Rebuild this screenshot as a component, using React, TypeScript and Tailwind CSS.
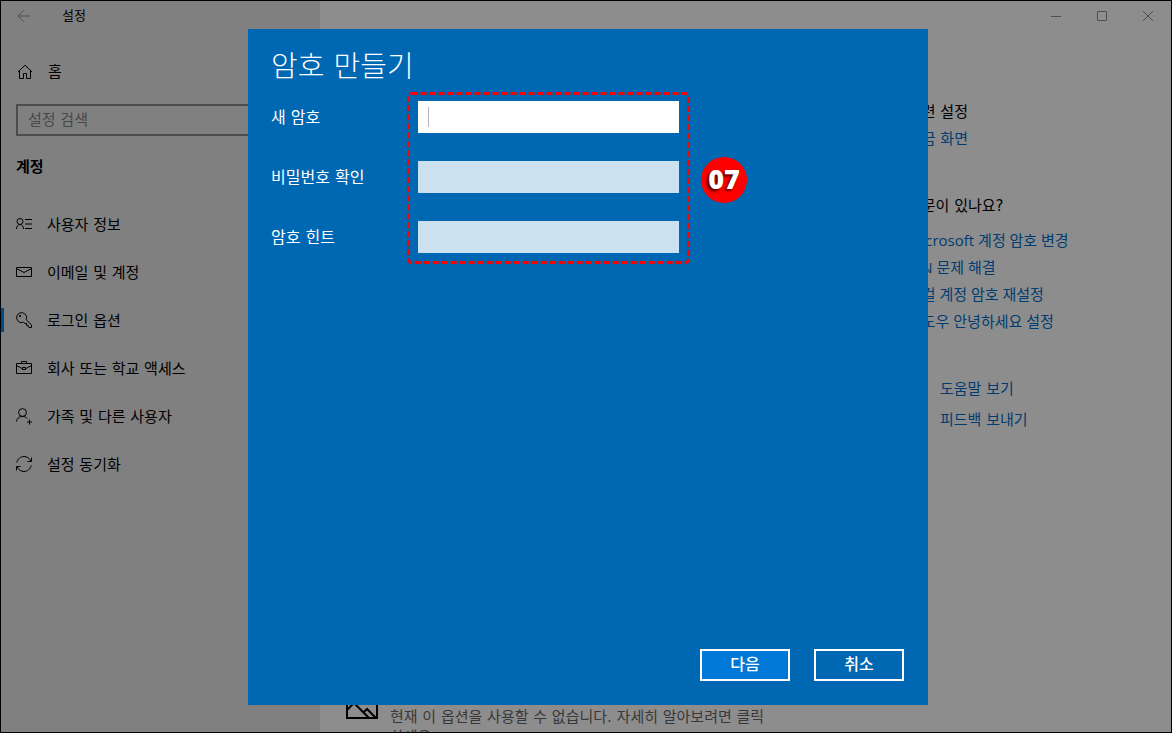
import { useState, type ReactNode } from "react";

const navItems: { id: string; label: string; icon: ReactNode }[] = [
  {
    id: "info",
    label: "사용자 정보",
    icon: (
      <>
        <circle cx="4" cy="5.5" r="3" />
        <path d="M.5 13c0-2.700 1.500-4.500 3.500-4.500s3.500 1.800 3.500 4.500M9 3.500h7M9 8h7M9 12.500h7" />
      </>
    ),
  },
  {
    id: "email",
    label: "이메일 및 계정",
    icon: <path d="M.5 3.500h15v9H.5zM.5 4.500l7.500 4 7.500-4" />,
  },
  {
    id: "signin",
    label: "로그인 옵션",
    icon: (
      <>
        <path d="M10.200 7.700A5 5 0 1 0 7.500 10.300l1.500 1.200h1.500v1.800h1.700v1.500l.8.700h2.500v-2.600z" />
        <circle cx="4" cy="4" r=".7" />
      </>
    ),
  },
  {
    id: "work",
    label: "회사 또는 학교 액세스",
    icon: <path d="M.5 3.500h15v10H.5zM5.500 3.500v-2h5v2M.5 5.500l5.500 3M15.500 5.500l-5.500 3M6.500 7.500h3v2h-3z" />,
  },
  {
    id: "family",
    label: "가족 및 다른 사용자",
    icon: (
      <>
        <circle cx="6.500" cy="4.500" r="3.900" />
        <path d="M.5 13.500c.3-3.300 2.700-5.100 6-5.100 2 0 3.700.8 4.800 2.300M13.500 11.500v5M11 14h5" />
      </>
    ),
  },
  {
    id: "sync",
    label: "설정 동기화",
    icon: <path d="M.8 6.500C1.700 3 4.500.5 8 .5c3.200 0 5.800 2 7 5M15.500 1.500v4h-4M15.200 9.500C14.300 13 11.500 15.500 8 15.500c-3.200 0-5.800-2-7-5M.5 14.500v-4h4" />,
  },
];

const supportLinks = ["Microsoft 계정 암호 변경", "PIN 문제 해결", "로컬 계정 암호 재설정", "윈도우 안녕하세요 설정"];

const fields = [
  { id: "new-password", label: "새 암호", type: "password" },
  { id: "confirm-password", label: "비밀번호 확인", type: "password" },
  { id: "hint", label: "암호 힌트", type: "text" },
];

function Icon({ children }: { children: ReactNode }) {
  return (
    <svg viewBox="0 0 16 16" className="size-4 shrink-0 overflow-visible" fill="none" stroke="currentColor" aria-hidden="true">
      {children}
    </svg>
  );
}

function Sidebar({ active, onSelect }: { active: string; onSelect: (id: string) => void }) {
  return (
    <aside className="w-[319px] shrink-0 bg-[#808080]">
      <div className="flex h-[30px] items-center pl-[15px] text-[13px]">
        <button aria-label="뒤로" className="mr-[30px] text-[#505050]">
          <Icon>
            <path d="M14 8H2M7.500 2.500L2 8l5.500 5.500" />
          </Icon>
        </button>
        설정
      </div>
      <button className="mt-[17px] flex h-12 w-full items-center gap-[15px] pl-4">
        <Icon>
          <path d="M.8 8L8 1.200 15.200 8M2.500 6.500v8h4v-5h3v5h4v-8" />
        </Icon>
        홈
      </button>
      <input
        type="search"
        aria-label="설정 검색"
        placeholder="설정 검색"
        className="mt-2 ml-[15px] block h-8 w-[288px] border-2 border-[#4d4d4d] px-2.5 placeholder:text-[#484848]"
      />
      <h2 className="flex h-16 items-center pb-0.5 pl-[15px] font-bold">계정</h2>
      <nav>
        {navItems.map((item) => (
          <button
            key={item.id}
            onClick={() => onSelect(item.id)}
            className="relative flex h-12 w-full items-center gap-[15px] pl-[15px] text-left"
          >
            {active === item.id && <span className="absolute left-0 h-6 w-[3px] bg-[#004a86]" />}
            <Icon>{item.icon}</Icon>
            <span className="pt-0.5">{item.label}</span>
          </button>
        ))}
      </nav>
    </aside>
  );
}

function WindowControls() {
  return (
    <div className="flex h-[30px] justify-end text-[#505050]">
      <button aria-label="최소화" className="flex w-[46px] items-center justify-center">
        <Icon>
          <path d="M3 8.500h10" />
        </Icon>
      </button>
      <button aria-label="최대화" className="flex w-[46px] items-center justify-center">
        <Icon>
          <path d="M3.500 3.500h9v9h-9z" />
        </Icon>
      </button>
      <button aria-label="닫기" className="flex w-[46px] items-center justify-center">
        <Icon>
          <path d="M3 3l10 10M13 3L3 13" />
        </Icon>
      </button>
    </div>
  );
}

function Related() {
  return (
    <aside className="w-[263px] shrink-0 pt-[68px] leading-[27px]">
      <h3>관련 설정</h3>
      <a href="#lock" className="block text-[#003c70]">
        잠금 화면
      </a>
      <h3 className="mt-10">질문이 있나요?</h3>
      <ul className="mt-[7px] font-['Open_Sans','Noto_Sans_CJK_KR',sans-serif] text-[#003c70]">
        {supportLinks.map((link) => (
          <li key={link} className="h-[27px]">
            <a href="#support">{link}</a>
          </li>
        ))}
      </ul>
      <div className="mt-[39px] text-[#003c70]">
        <a href="#help" className="flex h-[31px] items-center gap-4">
          <Icon>
            <path d="M1 2h14v10H7l-3 3v-3H1z" />
          </Icon>
          도움말 보기
        </a>
        <a href="#feedback" className="flex h-[31px] items-center gap-4">
          <Icon>
            <circle cx="8" cy="5" r="3.500" />
            <path d="M2 15c0-4 2.500-6 6-6s6 2 6 6" />
          </Icon>
          피드백 보내기
        </a>
      </div>
    </aside>
  );
}

function PasswordDialog() {
  return (
    <div className="absolute inset-0 flex items-center justify-center pl-1">
      <form
        role="dialog"
        aria-labelledby="dialog-title"
        onSubmit={(e) => e.preventDefault()}
        className="relative flex h-[676px] w-[680px] flex-col bg-[#0067b3] pt-[18px] pr-6 pb-6 pl-[23px] text-base text-white"
      >
        <h1 id="dialog-title" className="text-[29px] leading-10 font-light">
          암호 만들기
        </h1>
        <div className="mt-3.5 flex flex-col gap-7">
          {fields.map((field, i) => (
            <div key={field.id} className="relative flex h-8 items-center">
              <label htmlFor={field.id} className="w-[147px] pt-0.5">
                {field.label}
              </label>
              <input
                id={field.id}
                type={field.type}
                className={`h-8 w-[261px] px-2.5 text-black outline-none ${i === 0 ? "bg-white" : "bg-[#cce1ef]"}`}
              />
              {i === 0 && <span className="absolute left-[157px] h-5 w-px bg-[#b5b5b5]" />}
            </div>
          ))}
        </div>

        {/* Step marker */}
        <svg className="pointer-events-none absolute top-[63px] left-[159px] h-[173px] w-[283px]" fill="none" aria-hidden="true">
          <rect x="1.500" y="1.500" width="280" height="169" rx="3" stroke="#ff0000" strokeWidth="3" strokeDasharray="6 3" />
        </svg>
        <span className="absolute top-32 left-[453px] flex size-[46px] items-center justify-center rounded-full bg-[#ff0000] font-['Open_Sans',sans-serif] text-[27px] font-extrabold [text-shadow:-2px_2px_3px_#500000]">
          07
        </span>

        <div className="mt-auto flex justify-end gap-6 font-medium">
          <button type="submit" className="h-8 w-[90px] border-2 border-white bg-[#0078d7]">
            다음
          </button>
          <button type="button" className="h-8 w-[90px] border-2 border-white">
            취소
          </button>
        </div>
      </form>
    </div>
  );
}

export default function App() {
  const [active, setActive] = useState("signin");

  return (
    <div className="relative flex h-screen overflow-hidden border border-black bg-[#8d8d8d] font-['DejaVu_Sans','Noto_Sans_CJK_KR',sans-serif] text-[15px] leading-5 text-black">
      <Sidebar active={active} onSelect={setActive} />
      <main className="flex min-w-0 flex-1 flex-col">
        <WindowControls />
        <div className="flex min-h-0 flex-1">
          <div className="flex min-w-0 flex-1 flex-col justify-end pl-[26px]">
            <div className="flex h-[45px] gap-3">
              <svg viewBox="0 0 32 32" className="size-8 shrink-0" fill="none" stroke="black" strokeWidth="2" aria-hidden="true">
                <path d="M1 1h30v30H1zM1 23l7-7 15 15M17 26l4-4 9 9" />
              </svg>
              <p className="w-[382px] pt-5 text-[#383838]">현재 이 옵션을 사용할 수 없습니다. 자세히 알아보려면 클릭하세요.</p>
            </div>
          </div>
          <Related />
        </div>
      </main>
      <PasswordDialog />
    </div>
  );
}
